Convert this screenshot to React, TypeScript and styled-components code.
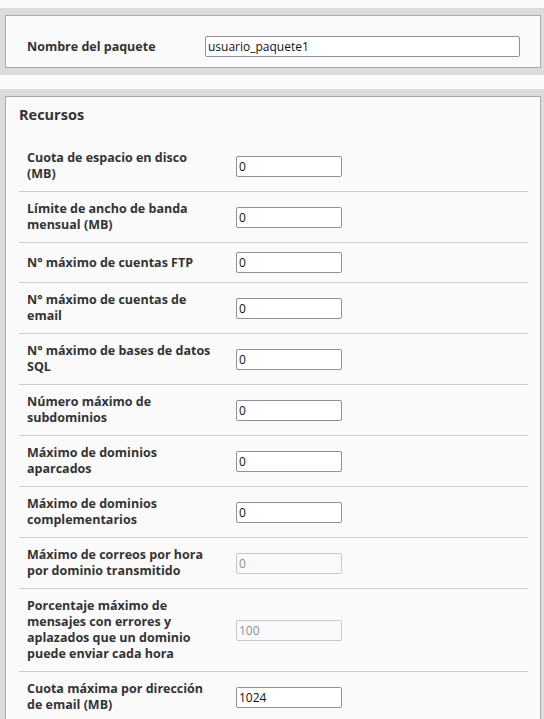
import React from 'react';
import styled, { createGlobalStyle } from 'styled-components';

const GlobalStyle = createGlobalStyle`
  html, body {
    margin: 0;
    padding: 0;
    background: #fafafa;
    font-family: "Open Sans", "Noto Sans", sans-serif;
    color: #333;
  }
`;

const Page = styled.div`
  padding-top: 8px;
`;

const Band = styled.div`
  background: #dcdcdc;
  padding: 7px 3px 7px 5px;
  margin-bottom: 14px;
`;

const Box = styled.div`
  border: 1px solid #aaa;
  background: #fafafa;
`;

const NameRow = styled.div`
  display: flex;
  align-items: center;
  padding: 20px 20px 10px 21px;
`;

const NameLabel = styled.label`
  flex: 0 0 178px;
  font-size: 12.5px;
  font-weight: 700;
  line-height: 16px;
`;

const Section = styled.div`
  padding: 8px 12px 20px 13px;
`;

const Heading = styled.h3`
  margin: 0 0 16px;
  font-size: 14.5px;
  font-weight: 700;
  line-height: 20px;
  color: #333;
`;

const Row = styled.div`
  display: flex;
  align-items: center;
  padding: 9px 0 9px 8px;
  border-bottom: 1px solid #cfcfcf;
`;

const RowLabel = styled.label`
  flex: 0 0 190px;
  margin-right: 19px;
  font-size: 12.5px;
  font-weight: 700;
  line-height: 16px;
`;

const TextInput = styled.input<{ $wide?: boolean }>`
  box-sizing: border-box;
  ${(p) => (p.$wide ? 'flex: 1;' : 'width: 106px;')}
  height: 21px;
  margin: 0;
  padding: 0 2px;
  border: 1px solid #8f8f9d;
  border-radius: 2px;
  background: #fff;
  font-family: "Open Sans", "Noto Sans", sans-serif;
  font-size: 12px;
  color: #111;
  outline: none;

  &:disabled {
    border-color: #c9c9cc;
    background: #f9f9f9;
    color: #8a8f98;
  }
`;

const resources = [
  { label: 'Cuota de espacio en disco (MB)', value: '0' },
  { label: 'Límite de ancho de banda mensual (MB)', value: '0' },
  { label: 'N° máximo de cuentas FTP', value: '0' },
  { label: 'N° máximo de cuentas de email', value: '0' },
  { label: 'N° máximo de bases de datos SQL', value: '0' },
  { label: 'Número máximo de subdominios', value: '0' },
  { label: 'Máximo de dominios aparcados', value: '0' },
  { label: 'Máximo de dominios complementarios', value: '0' },
  { label: 'Máximo de correos por hora por dominio transmitido', value: '0', disabled: true },
  {
    label: 'Porcentaje máximo de mensajes con errores y aplazados que un dominio puede enviar cada hora',
    value: '100',
    disabled: true,
  },
  { label: 'Cuota máxima por dirección de email (MB)', value: '1024' },
];

const App: React.FC = () => {
  return (
    <Page>
      <GlobalStyle />
      <Band>
        <Box>
          <NameRow>
            <NameLabel htmlFor="pkgname">Nombre del paquete</NameLabel>
            <TextInput id="pkgname" $wide defaultValue="usuario_paquete1" />
          </NameRow>
        </Box>
      </Band>
      <Band>
        <Box>
          <Section>
            <Heading>Recursos</Heading>
            {resources.map((r, i) => (
              <Row key={i}>
                <RowLabel htmlFor={`res${i}`}>{r.label}</RowLabel>
                <TextInput id={`res${i}`} defaultValue={r.value} disabled={r.disabled} />
              </Row>
            ))}
          </Section>
        </Box>
      </Band>
    </Page>
  );
};

export default App;
